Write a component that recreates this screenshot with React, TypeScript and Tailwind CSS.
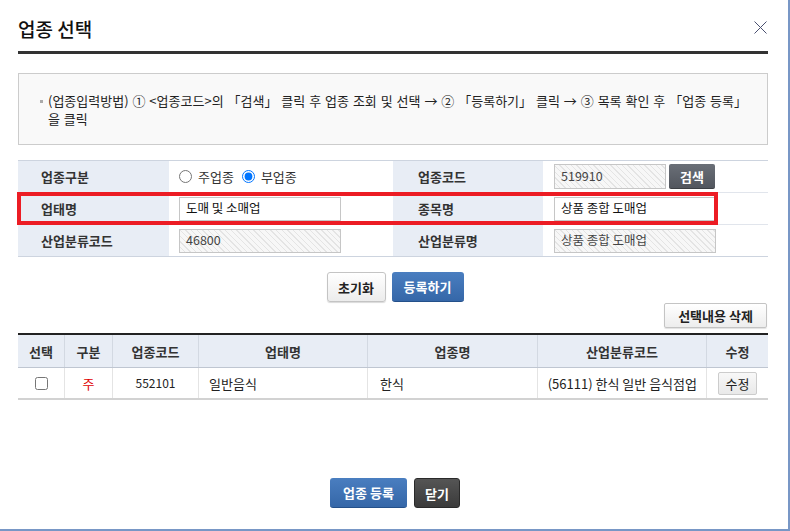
import React from "react";

const hatch =
  "[background-image:repeating-linear-gradient(45deg,#f7f7f7_0px,#f7f7f7_3px,#e4e4e4_3px,#e4e4e4_4px)]";

function Label({ children, w, pl }: { children: React.ReactNode; w: string; pl: string }) {
  return (
    <div className={`${w} ${pl} bg-[#e8edf5] flex items-center text-[13px] font-bold text-[#333]`}>
      {children}
    </div>
  );
}

function Field({ value, w, h, hatched }: { value: string; w: string; h: string; hatched?: boolean }) {
  return (
    <div
      className={`${w} ${h} border border-[#c6c6c6] flex items-center pl-[6px] text-[12.5px] ${
        hatched ? `${hatch} text-[#444]` : "bg-white text-[#111]"
      }`}
    >
      {value}
    </div>
  );
}

export default function App() {
  return (
    <div className="w-[790px] h-[531px] bg-white border-r-[2px] border-b-[2px] border-[#7897c6] font-['Noto_Sans_CJK_KR',sans-serif] text-[#333] pl-[18px] pr-[20px] flex flex-col overflow-hidden leading-none">
      {/* header */}
      <div className="h-[51px] flex items-start justify-between pt-[19px]">
        <div className="text-[19px] leading-[19px] font-medium text-[#111]">업종 선택</div>
        <svg width="13" height="13" viewBox="0 0 13 13" className="mt-[2px] mr-[1px]">
          <path d="M0.5 0.5 L12.5 12.5 M12.5 0.5 L0.5 12.5" stroke="#4a5070" strokeWidth="1" />
        </svg>
      </div>
      <div className="h-[3px] bg-[#333]" />

      {/* info box */}
      <div className="mt-[19px] h-[72px] border border-[#cccccc] bg-[#f9f9f9] pl-[21px] pr-[20px] pt-[18px] flex items-start gap-[5px]">
        <div className="w-[3px] h-[3px] bg-[#aaa] mt-[8px] shrink-0" />
        <div className="text-[13px] leading-[18px] text-[#222] [word-spacing:1px]">
          (업종입력방법) ① &lt;업종코드&gt;의 「검색」 클릭 후 업종 조회 및 선택 → ② 「등록하기」 클릭 → ③ 목록 확인 후 「업종 등록」
          <br />을 클릭
        </div>
      </div>

      {/* form */}
      <div className="relative mt-[15px] border-t border-[#cdd4df]">
        <div className="flex h-[32px] border-b border-[#e1e5ec]">
          <Label w="w-[151px]" pl="pl-[23px]">업종구분</Label>
          <div className="w-[224px] flex items-center pl-[10px] text-[13px] text-[#333]">
            <input type="radio" name="g" className="m-0 w-[13px] h-[13px]" />
            <span className="ml-[6px]">주업종</span>
            <input type="radio" name="g" defaultChecked className="m-0 ml-[8px] w-[13px] h-[13px]" />
            <span className="ml-[6px]">부업종</span>
          </div>
          <Label w="w-[150px]" pl="pl-[25px]">업종코드</Label>
          <div className="w-[225px] flex items-center pl-[11px] gap-[3px]">
            <Field value="519910" w="w-[112px]" h="h-[25px]" hatched />
            <div className="w-[46px] h-[25px] rounded-[2px] bg-linear-to-b from-[#6a6f77] to-[#52565e] border-b border-[#3c3f44] flex items-center justify-center text-white text-[13px] font-bold">
              검색
            </div>
          </div>
        </div>
        <div className="flex h-[32px] border-b border-[#e1e5ec]">
          <Label w="w-[151px]" pl="pl-[23px]">업태명</Label>
          <div className="w-[224px] flex items-center pl-[10px]">
            <Field value="도매 및 소매업" w="w-[162px]" h="h-[24px]" />
          </div>
          <Label w="w-[150px]" pl="pl-[25px]">종목명</Label>
          <div className="w-[225px] flex items-center pl-[11px]">
            <Field value="상품 종합 도매업" w="w-[162px]" h="h-[24px]" />
          </div>
        </div>
        <div className="flex h-[32px] border-b border-[#cdd4df]">
          <Label w="w-[151px]" pl="pl-[23px]">산업분류코드</Label>
          <div className="w-[224px] flex items-center pl-[10px]">
            <Field value="46800" w="w-[162px]" h="h-[24px]" hatched />
          </div>
          <Label w="w-[150px]" pl="pl-[25px]">산업분류명</Label>
          <div className="w-[225px] flex items-center pl-[11px]">
            <Field value="상품 종합 도매업" w="w-[162px]" h="h-[24px]" hatched />
          </div>
        </div>
        {/* red highlight */}
        <div className="absolute left-[-1px] top-[31px] w-[701px] h-[33px] border-[4px] border-[#ec1c24] pointer-events-none" />
      </div>

      {/* action buttons */}
      <div className="mt-[15px] flex justify-center gap-[6px] pl-[4px]">
        <div className="w-[59px] h-[30px] rounded-[3px] border border-[#c4c4c4] bg-linear-to-b from-white to-[#ececec] shadow-[0_1px_1px_rgba(0,0,0,0.15)] flex items-center justify-center text-[13px] font-bold text-[#222]">
          초기화
        </div>
        <div className="w-[72px] h-[30px] rounded-[3px] bg-linear-to-b from-[#4a7ec0] to-[#3567a8] border-b border-[#24508a] flex items-center justify-center text-[13px] font-bold text-white">
          등록하기
        </div>
      </div>
      <div className="mt-[1px] flex justify-end pr-[1px]">
        <div className="w-[103px] h-[25px] rounded-[2px] border border-[#c4c4c4] bg-linear-to-b from-white to-[#ededed] shadow-[0_1px_1px_rgba(0,0,0,0.12)] flex items-center justify-center text-[13px] font-bold text-[#222]">
          선택내용 삭제
        </div>
      </div>

      {/* list table */}
      <div className="mt-[5px] border-t-2 border-[#222]">
        <div className="grid grid-cols-[47px_48px_86px_169px_170px_169px_61px] h-[33px] bg-[#e8edf5] border-b border-[#bfc6d1] text-[13px] font-bold text-[#333]">
          {["선택", "구분", "업종코드", "업태명", "업종명", "산업분류코드", "수정"].map((t, i) => (
            <div
              key={t}
              className={`flex items-center justify-center ${i < 6 ? "border-r border-[#d3d9e2]" : ""}`}
            >
              {t}
            </div>
          ))}
        </div>
        <div className="grid grid-cols-[47px_48px_86px_169px_170px_169px_61px] h-[32px] border-b-2 border-[#d2d2d2] text-[13px] text-[#222]">
          <div className="flex items-center justify-center border-r border-[#e4e4e4]">
            <input type="checkbox" className="m-0 w-[13px] h-[13px]" />
          </div>
          <div className="flex items-center justify-center border-r border-[#e4e4e4] text-[#e00000]">주</div>
          <div className="flex items-center justify-center border-r border-[#e4e4e4] text-[12px]">552101</div>
          <div className="flex items-center pl-[10px] border-r border-[#e4e4e4]">일반음식</div>
          <div className="flex items-center pl-[12px] border-r border-[#e4e4e4]">한식</div>
          <div className="flex items-center justify-end pr-[9px] border-r border-[#e4e4e4]">(56111) 한식 일반 음식점업</div>
          <div className="flex items-center justify-center">
            <div className="w-[39px] h-[23px] rounded-[2px] border border-[#cccccc] bg-linear-to-b from-[#f8f8f8] to-[#e9e9e9] flex items-center justify-center text-[13px] text-[#222]">
              수정
            </div>
          </div>
        </div>
      </div>

      {/* bottom buttons */}
      <div className="mt-[78px] flex justify-center gap-[7px] pl-[4px]">
        <div className="w-[77px] h-[30px] rounded-[3px] bg-linear-to-b from-[#4a7ec0] to-[#3567a8] border-b border-[#24508a] flex items-center justify-center text-[13px] font-bold text-white">
          업종 등록
        </div>
        <div className="w-[46px] h-[30px] rounded-[3px] bg-linear-to-b from-[#555555] to-[#3b3b3b] border border-[#2a2a2a] flex items-center justify-center text-[13px] font-bold text-white">
          닫기
        </div>
      </div>
    </div>
  );
}
